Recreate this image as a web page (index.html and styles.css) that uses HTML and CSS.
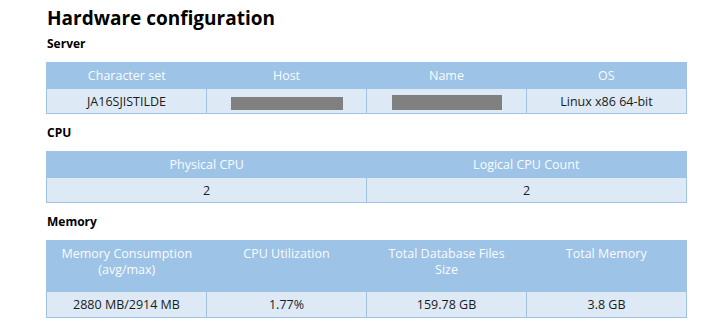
FILE: index.html
```html
<!DOCTYPE html>
<html lang="en">
<head>
    <meta charset="UTF-8">
    <meta name="viewport" content="width=device-width, initial-scale=1.0">
    <title>Hardware configuration</title>
    <link rel="stylesheet" href="styles.css">
</head>
<body>
    <div class="report">
        <h1 class="report-title">Hardware configuration</h1>

        <!-- Server -->
        <h2 class="section-title">Server</h2>
        <table class="info-table">
            <thead>
                <tr>
                    <th>Character set</th>
                    <th>Host</th>
                    <th>Name</th>
                    <th>OS</th>
                </tr>
            </thead>
            <tbody>
                <tr>
                    <td>JA16SJISTILDE</td>
                    <td><span class="masked masked-host"></span></td>
                    <td><span class="masked masked-name"></span></td>
                    <td>Linux x86 64-bit</td>
                </tr>
            </tbody>
        </table>

        <!-- CPU -->
        <h2 class="section-title">CPU</h2>
        <table class="info-table">
            <thead>
                <tr>
                    <th>Physical CPU</th>
                    <th>Logical CPU Count</th>
                </tr>
            </thead>
            <tbody>
                <tr>
                    <td>2</td>
                    <td>2</td>
                </tr>
            </tbody>
        </table>

        <!-- Memory -->
        <h2 class="section-title section-memory">Memory</h2>
        <table class="info-table tall-head">
            <thead>
                <tr>
                    <th>Memory Consumption<br>(avg/max)</th>
                    <th>CPU Utilization</th>
                    <th>Total Database Files<br>Size</th>
                    <th>Total Memory</th>
                </tr>
            </thead>
            <tbody>
                <tr>
                    <td>2880 MB/2914 MB</td>
                    <td>1.77%</td>
                    <td>159.78 GB</td>
                    <td>3.8 GB</td>
                </tr>
            </tbody>
        </table>
    </div>
</body>
</html>
```

FILE: styles.css
```css
* {
    margin: 0;
    padding: 0;
    box-sizing: border-box;
}

body {
    background: #ffffff;
    font-family: 'Open Sans', 'Noto Sans', sans-serif;
    color: #1b1b1b;
}

.report {
    padding: 5px 14px 0 46px;
}

/* Headings */
.report-title {
    font-size: 19px;
    font-weight: bold;
    line-height: 26px;
    color: #000000;
    padding-left: 1px;
}

.section-title {
    font-size: 12px;
    font-weight: bold;
    line-height: 16px;
    color: #000000;
    padding-left: 1px;
    margin-top: 5px;
    margin-bottom: 10px;
}

.section-memory {
    margin-top: 6px;
}

/* Tables */
.info-table {
    width: 641px;
    border-collapse: collapse;
    table-layout: fixed;
    border: 1px solid #9dc3e6;
    margin-bottom: 11px;
}

.info-table th {
    background: #9dc3e6;
    color: #fafcff;
    font-weight: normal;
    font-size: 12.5px;
    line-height: 16px;
    height: 26px;
    padding: 5px 8px 4px;
    text-align: center;
    vertical-align: top;
}

.info-table td {
    background: #ddeaf6;
    border: 1px solid #9dc3e6;
    font-size: 12.5px;
    line-height: 16px;
    height: 25px;
    padding: 4px 8px 3px;
    text-align: center;
}

.tall-head th {
    height: 51px;
}

.tall-head td {
    height: 26px;
}

/* Hidden values */
.masked {
    display: inline-block;
    background: #808080;
    vertical-align: middle;
}

.masked-host {
    width: 112px;
    height: 13px;
    margin-top: 2px;
}

.masked-name {
    width: 110px;
    height: 15px;
}
```
